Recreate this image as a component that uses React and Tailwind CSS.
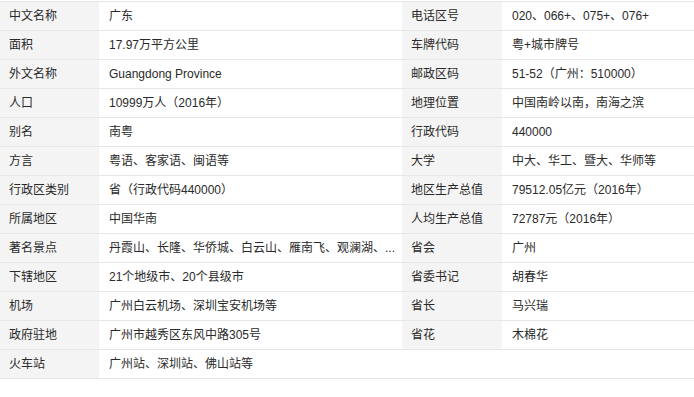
import React from 'react';

const ROWS = [
  ['中文名称', '广东', '电话区号', '020、066+、075+、076+'],
  ['面积', '17.97万平方公里', '车牌代码', '粤+城市牌号'],
  ['外文名称', 'Guangdong Province', '邮政区码', '51-52（广州：510000）'],
  ['人口', '10999万人（2016年）', '地理位置', '中国南岭以南，南海之滨'],
  ['别名', '南粤', '行政代码', '440000'],
  ['方言', '粤语、客家语、闽语等', '大学', '中大、华工、暨大、华师等'],
  ['行政区类别', '省（行政代码440000）', '地区生产总值', '79512.05亿元（2016年）'],
  ['所属地区', '中国华南', '人均生产总值', '72787元（2016年）'],
  ['著名景点', '丹霞山、长隆、华侨城、白云山、雁南飞、观澜湖、...', '省会', '广州'],
  ['下辖地区', '21个地级市、20个县级市', '省委书记', '胡春华'],
  ['机场', '广州白云机场、深圳宝安机场等', '省长', '马兴瑞'],
  ['政府驻地', '广州市越秀区东风中路305号', '省花', '木棉花'],
];

const font = { fontFamily: '"Liberation Sans", Arial, "Noto Sans CJK SC", sans-serif' };

export default function App() {
  return (
    <div className="w-[694px] h-[397px] bg-white pt-px text-[12px] text-[#2a2a2a]" style={font}>
      <div className="border-t border-[#e6e6e6]">
        {ROWS.map((r, i) => (
          <div key={i} className="grid grid-cols-[99px_303px_100px_192px] h-[29px] border-b border-[#e6e6e6]">
            <div className="bg-[#f4f4f4] pl-[9px] flex items-center">{r[0]}</div>
            <div className="pl-[10px] flex items-center whitespace-nowrap overflow-hidden">{r[1]}</div>
            <div className="bg-[#f4f4f4] pl-[9px] flex items-center">{r[2]}</div>
            <div className="pl-[10px] flex items-center whitespace-nowrap">{r[3]}</div>
          </div>
        ))}
        <div className="grid grid-cols-[99px_595px] h-[29px] border-b border-[#e6e6e6]">
          <div className="bg-[#f4f4f4] pl-[9px] flex items-center">火车站</div>
          <div className="pl-[10px] flex items-center">广州站、深圳站、佛山站等</div>
        </div>
      </div>
    </div>
  );
}
